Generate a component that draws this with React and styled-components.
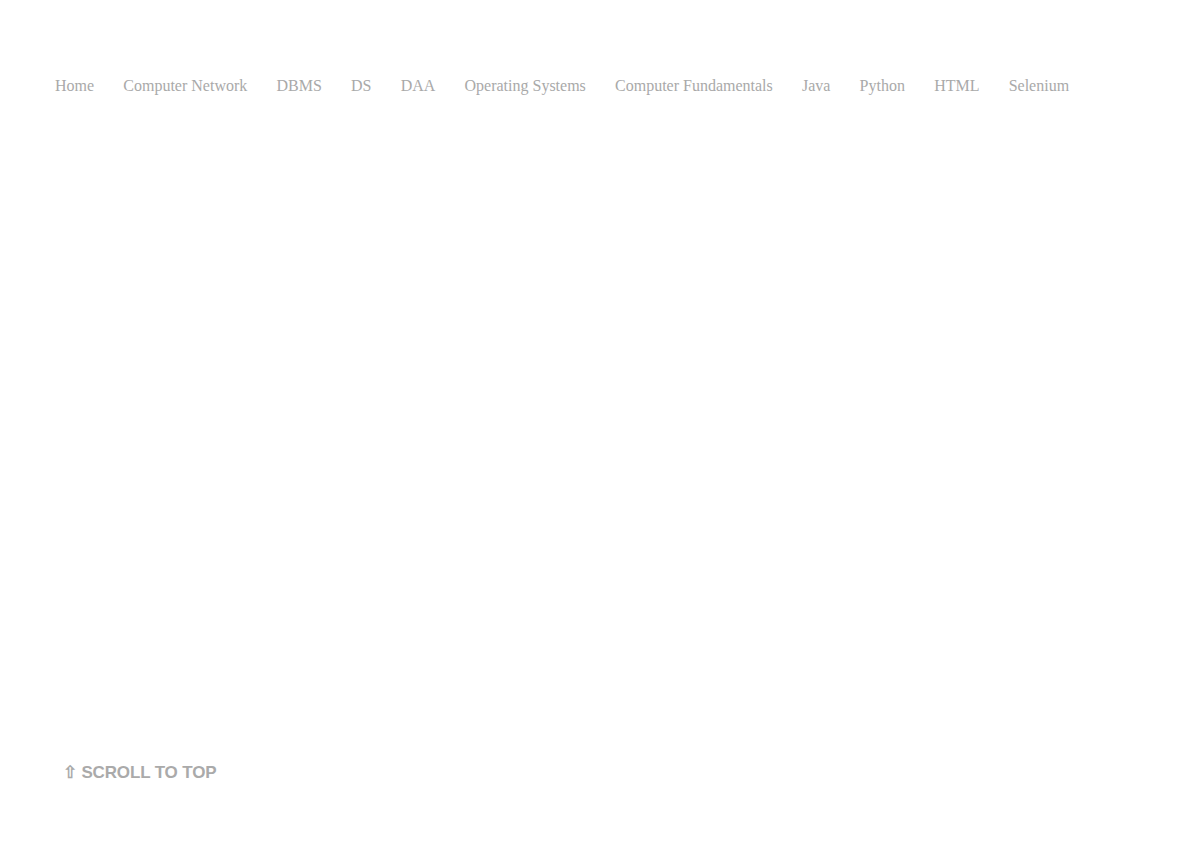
import React from "react"
import styled, { createGlobalStyle } from "styled-components"

const GlobalStyle = createGlobalStyle`
  html, body {
    margin: 0;
    padding: 0;
    background: #fff;
  }
`

const Page = styled.div`
  width: 1200px;
  height: 849px;
  display: flex;
  flex-direction: column;
  justify-content: space-between;
  box-sizing: border-box;
  padding: 76px 0 66px 55px;
`

const Nav = styled.nav`
  display: flex;
  gap: 29.2px;
`

const NavLink = styled.a`
  font-family: "Liberation Serif", serif;
  font-size: 16px;
  line-height: 20px;
  color: #a9a9a9;
  text-decoration: none;
  white-space: nowrap;
`

const ScrollTop = styled.a`
  margin-left: 8px;
  font-family: "Liberation Sans", Arial, sans-serif;
  font-size: 17px;
  font-weight: bold;
  line-height: 20px;
  color: #aaaaaa;
  text-decoration: none;
  letter-spacing: -0.15px;
`

const links = [
  "Home",
  "Computer Network",
  "DBMS",
  "DS",
  "DAA",
  "Operating Systems",
  "Computer Fundamentals",
  "Java",
  "Python",
  "HTML",
  "Selenium",
]

const App = () => {
  return (
    <>
      <GlobalStyle />
      <Page>
        <Nav>
          {links.map(l => (
            <NavLink key={l} href="#">
              {l}
            </NavLink>
          ))}
        </Nav>
        <ScrollTop href="#">⇧ SCROLL TO TOP</ScrollTop>
      </Page>
    </>
  )
}

export default App
